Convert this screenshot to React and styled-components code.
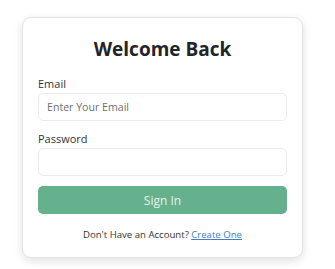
import React from "react";
import styled, { createGlobalStyle } from "styled-components";

const Global = createGlobalStyle`
  html, body {
    margin: 0;
    padding: 0;
    background: #ffffff;
    font-family: "Open Sans", "Noto Sans", sans-serif;
  }
`;

const Page = styled.div`
  width: 335px;
  height: 269px;
  box-sizing: border-box;
  padding: 17px 0 0 22px;
  overflow: hidden;
`;

const Card = styled.form`
  width: 281px;
  height: 241px;
  box-sizing: border-box;
  background: #fff;
  border: 1px solid #e4e4e4;
  border-radius: 9px;
  box-shadow: 0 3px 10px rgba(0, 0, 0, 0.12);
  padding: 17px 15px 0 15px;
  display: flex;
  flex-direction: column;
`;

const Title = styled.h1`
  margin: 0 0 14px;
  text-align: center;
  font-size: 19px;
  font-weight: 700;
  color: #222428;
  line-height: 28px;
`;

const Label = styled.label`
  font-size: 11px;
  color: #333;
  line-height: 14px;
  margin-bottom: 2px;
`;

const Input = styled.input`
  box-sizing: border-box;
  width: 100%;
  height: 28px;
  border: 1px solid #ececec;
  border-radius: 5px;
  padding: 0 8px;
  font-family: inherit;
  font-size: 10.6px;
  color: #333;
  margin-bottom: ${(p) => p.$gap}px;
  &::placeholder {
    color: #6f6f6f;
  }
`;

const Button = styled.button`
  height: 28px;
  border: none;
  border-radius: 5px;
  background: #65b18d;
  color: #e8f3ee;
  font-family: inherit;
  font-size: 12px;
  margin-bottom: 14px;
`;

const Footer = styled.p`
  margin: 0;
  text-align: center;
  font-size: 9.6px;
  color: #333;
  a {
    color: #3d7fc6;
    text-decoration: underline;
  }
`;

export default function App() {
  return (
    <Page>
      <Global />
      <Card onSubmit={(e) => e.preventDefault()}>
        <Title>Welcome Back</Title>
        <Label>Email</Label>
        <Input type="email" placeholder="Enter Your Email" $gap={11} />
        <Label>Password</Label>
        <Input type="password" $gap={10} />
        <Button type="submit">Sign In</Button>
        <Footer>
          Don't Have an Account? <a href="#">Create One</a>
        </Footer>
      </Card>
    </Page>
  );
}
